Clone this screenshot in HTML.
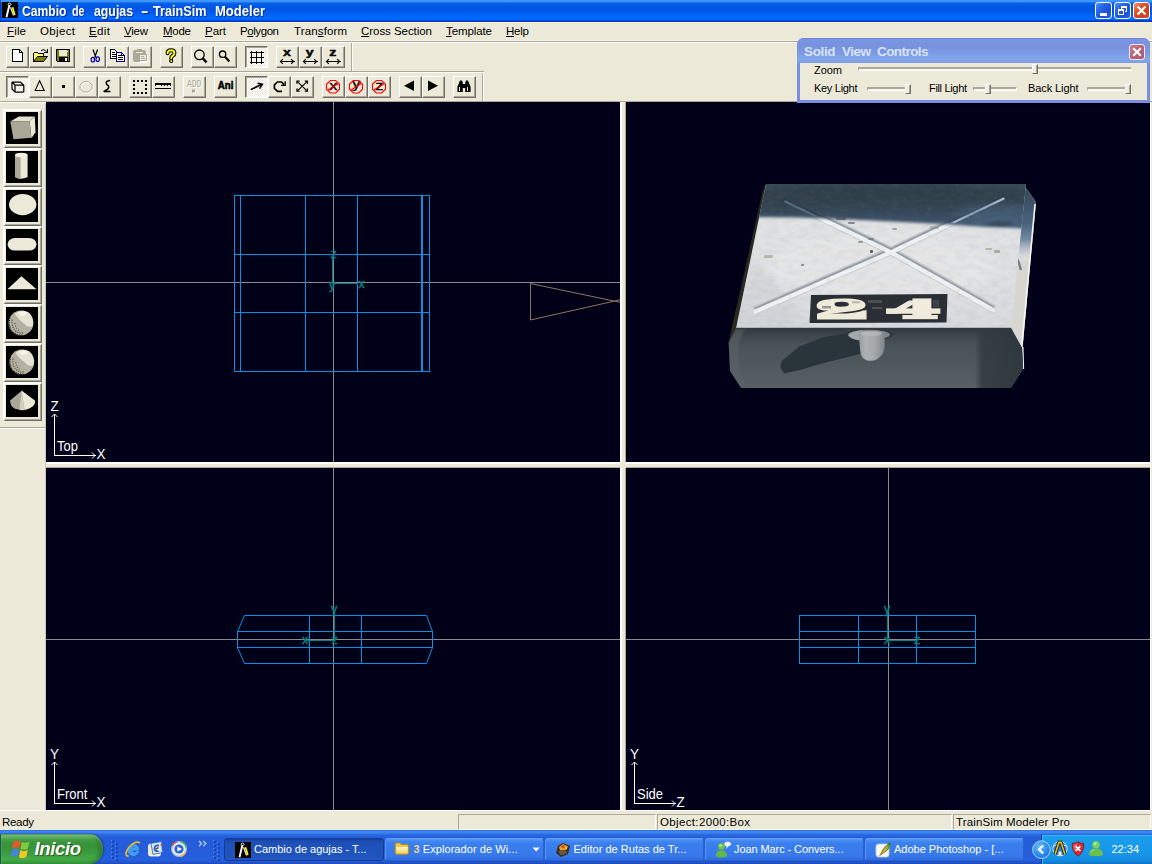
<!DOCTYPE html>
<html><head><meta charset="utf-8"><title>TrainSim Modeler</title>
<style>
html,body{margin:0;padding:0;}
body{width:1152px;height:864px;overflow:hidden;background:#ECE9D8;position:relative;font-family:"Liberation Sans",sans-serif;font-size:12px;color:#000;}
div,svg,span{position:absolute;box-sizing:border-box;}
.t{white-space:nowrap;line-height:1;}
.btn{background:#ECE9D8;border-top:1px solid #fff;border-left:1px solid #fff;border-right:1px solid #716F64;border-bottom:1px solid #716F64;}
.btn:after{content:"";position:absolute;left:0;top:0;right:0;bottom:0;border-right:1px solid #ACA899;border-bottom:1px solid #ACA899;}
.btnp{background-color:#F6F4EC;border-top:1px solid #716F64;border-left:1px solid #716F64;border-right:1px solid #fff;border-bottom:1px solid #fff;background-image:linear-gradient(45deg,#fff 25%,transparent 25%,transparent 75%,#fff 75%),linear-gradient(45deg,#fff 25%,transparent 25%,transparent 75%,#fff 75%);background-size:2px 2px;background-position:0 0,1px 1px;background-color:#ECE9D8;}
.btnp:after{content:"";position:absolute;left:0;top:0;right:0;bottom:0;border-left:1px solid #ACA899;border-top:1px solid #ACA899;}
.ico{left:0;top:0;}
.vp{background:#000019;overflow:hidden;}
.pane{border-top:1px solid #ACA899;border-left:1px solid #ACA899;border-right:1px solid #fff;border-bottom:1px solid #fff;}
.tb{color:#fff;font-size:11px;white-space:nowrap;line-height:1;}
</style></head>
<body>
<div style="left:0px;top:0px;width:1152px;height:22px;background:linear-gradient(to bottom,#4098FF 0,#3C93FC 1.5px,#1C74F0 2.5px,#0562E9 3.5px,#005AE6 5px,#0056E2 8px,#0058E8 11px,#0060F4 14px,#0067FD 16.5px,#0068FC 19.5px,#0048DC 20.5px,#0036CA 21.5px,#0034C8 22px);"></div>
<div style="left:0px;top:22px;width:1152px;height:1px;background:#F8F2DE;"></div>
<div style="left:2px;top:2px;width:16px;height:16px;background:#000;"><svg width="16" height="16" viewBox="0 0 16 16" style="left:0;top:0"><path d="M7.3 3.4L4.5 15.2" stroke="#fff" stroke-width="1.9" fill="none"/><path d="M8.5 5.2L11.6 13.6" stroke="#E4E4E4" stroke-width="1.3" fill="none"/><path d="M10.5 5.2L12.8 12.9" stroke="#FFFF00" stroke-width="1.7" fill="none"/><path d="M7.5 0.8L9.1 2.4L7.5 4L5.9 2.4Z" fill="none" stroke="#fff" stroke-width="1"/></svg></div>
<div style="left:0px;top:0px;width:1px;height:22px;background:rgba(0,16,110,.5);"></div>
<div class="t" style="left:22.0px;top:4px;font-size:14.5px;transform-origin:0 0;transform:scaleX(0.8369);font-weight:bold;color:#fff;text-shadow:1px 1px 0 #0A2A8A;">Cambio</div>
<div class="t" style="left:72.0px;top:4px;font-size:14.5px;transform-origin:0 0;transform:scaleX(0.7387);font-weight:bold;color:#fff;text-shadow:1px 1px 0 #0A2A8A;">de</div>
<div class="t" style="left:93.5px;top:4px;font-size:14.5px;transform-origin:0 0;transform:scaleX(0.849);font-weight:bold;color:#fff;text-shadow:1px 1px 0 #0A2A8A;">agujas</div>
<div class="t" style="left:140.5px;top:4px;font-size:14.5px;transform-origin:0 0;transform:scaleX(1.5484);font-weight:bold;color:#fff;text-shadow:1px 1px 0 #0A2A8A;">-</div>
<div class="t" style="left:152.5px;top:4px;font-size:14.5px;transform-origin:0 0;transform:scaleX(0.8735);font-weight:bold;color:#fff;text-shadow:1px 1px 0 #0A2A8A;">TrainSim</div>
<div class="t" style="left:214.5px;top:4px;font-size:14.5px;transform-origin:0 0;transform:scaleX(0.8994);font-weight:bold;color:#fff;text-shadow:1px 1px 0 #0A2A8A;">Modeler</div>
<div style="left:1095px;top:2px;width:17px;height:17px;border:1px solid #fff;border-radius:3px;background:linear-gradient(135deg,#4C8CF8 0%,#2864E8 35%,#1A50D8 70%,#2C68F0 100%);"><div style="left:4px;top:10px;width:7px;height:3px;background:#fff"></div></div>
<div style="left:1114px;top:2px;width:17px;height:17px;border:1px solid #fff;border-radius:3px;background:linear-gradient(135deg,#4C8CF8 0%,#2864E8 35%,#1A50D8 70%,#2C68F0 100%);"><svg width="15" height="15" viewBox="0 0 15 15" style="left:0;top:0" shape-rendering="crispEdges"><path d="M6.5 5.5V3.5H11.5V8.5H9.5" fill="none" stroke="#fff"/><rect x="6" y="3" width="6" height="2" fill="#fff"/><rect x="3.5" y="6.5" width="5" height="5" fill="none" stroke="#fff"/><rect x="3" y="6" width="6" height="2" fill="#fff"/></svg></div>
<div style="left:1133px;top:2px;width:17px;height:17px;border:1px solid #fff;border-radius:3px;background:linear-gradient(135deg,#F0967A 0%,#E0552E 35%,#C8401C 75%,#D85A30 100%);"><svg width="15" height="15" viewBox="0 0 15 15" style="left:0;top:0"><path d="M3.6 3.6L11.4 11.4M11.4 3.6L3.6 11.4" stroke="#fff" stroke-width="2.1" fill="none"/></svg></div>
<div class="t" style="left:7px;top:26px;font-size:11.5px;letter-spacing:0.151px;"><u>F</u>ile</div>
<div class="t" style="left:40px;top:26px;font-size:11.5px;letter-spacing:0.35px;">Object</div>
<div class="t" style="left:89px;top:26px;font-size:11.5px;letter-spacing:0.391px;"><u>E</u>dit</div>
<div class="t" style="left:124px;top:26px;font-size:11.5px;letter-spacing:-0.245px;"><u>V</u>iew</div>
<div class="t" style="left:163px;top:26px;font-size:11.5px;letter-spacing:-0.26px;"><u>M</u>ode</div>
<div class="t" style="left:205px;top:26px;font-size:11.5px;letter-spacing:-0.031px;"><u>P</u>art</div>
<div class="t" style="left:240px;top:26px;font-size:11.5px;letter-spacing:-0.43px;">P<u>o</u>lygon</div>
<div class="t" style="left:294px;top:26px;font-size:11.5px;letter-spacing:0.127px;">Tran<u>s</u>form</div>
<div class="t" style="left:361px;top:26px;font-size:11.5px;letter-spacing:-0.049px;"><u>C</u>ross Section</div>
<div class="t" style="left:446px;top:26px;font-size:11.5px;letter-spacing:-0.096px;"><u>T</u>emplate</div>
<div class="t" style="left:506px;top:26px;font-size:11.5px;letter-spacing:-0.224px;"><u>H</u>elp</div>
<div style="left:0px;top:40px;width:1152px;height:1px;background:#F6F4EC;"></div>
<div style="left:0px;top:41px;width:1152px;height:1px;background:#ACA899;"></div>
<div style="left:0px;top:42px;width:1152px;height:1px;background:#fff;"></div>
<div class="btn" style="left:6px;top:46px;width:23px;height:22px;"><div style="left:-1px;top:-1px;width:23px;height:22px;z-index:2"><svg class="ico" width="23" height="22" viewBox="0 0 23 22" shape-rendering="crispEdges"><path d="M6.5 3.5H13.5L16.5 6.5V15.5H6.5Z" fill="#fff" stroke="#000"/><path d="M13.5 3.5V6.5H16.5" fill="none" stroke="#000"/></svg></div></div>
<div class="btn" style="left:29px;top:46px;width:23px;height:22px;"><div style="left:-1px;top:-1px;width:23px;height:22px;z-index:2"><svg class="ico" width="23" height="22" viewBox="0 0 23 22" shape-rendering="crispEdges"><path d="M4.5 15.5V7.5L5.5 6.5H8.5L9.5 7.5H14.5V10" fill="#FFFF70" stroke="#000"/><path d="M4.5 15.5L8.5 10.5H18.5L14.5 15.5Z" fill="#808000" stroke="#000" shape-rendering="auto"/><path d="M12 4.6Q14.8 2.2 17.6 5.6" fill="none" stroke="#000" shape-rendering="auto"/><path d="M15 6.5H18.5V3" fill="none" stroke="#000"/></svg></div></div>
<div class="btn" style="left:52px;top:46px;width:23px;height:22px;"><div style="left:-1px;top:-1px;width:23px;height:22px;z-index:2"><svg class="ico" width="23" height="22" viewBox="0 0 23 22" shape-rendering="crispEdges"><path d="M4.5 3.5H17.5V15.5H5.5L4.5 14.5Z" fill="#808000" stroke="#000"/><rect x="7" y="4" width="8" height="6" fill="#ECE9D8"/><rect x="7" y="11" width="9" height="5" fill="#000"/><rect x="13" y="12" width="2" height="3" fill="#fff"/><rect x="15" y="5" width="1" height="1" fill="#fff"/></svg></div></div>
<div class="btn" style="left:83px;top:46px;width:23px;height:22px;"><div style="left:-1px;top:-1px;width:23px;height:22px;z-index:2"><svg class="ico" width="23" height="22" viewBox="0 0 23 22" ><path d="M10 3.5L12.9 11.5M14.6 3.5L11.7 11.5" fill="none" stroke="#000" stroke-width="1.2"/><ellipse cx="9.8" cy="13.7" rx="1.7" ry="2.3" fill="none" stroke="#0000A8" stroke-width="1.2"/><ellipse cx="14.7" cy="13.2" rx="1.7" ry="2.3" fill="none" stroke="#0000A8" stroke-width="1.2"/></svg></div></div>
<div class="btn" style="left:106px;top:46px;width:23px;height:22px;"><div style="left:-1px;top:-1px;width:23px;height:22px;z-index:2"><svg class="ico" width="23" height="22" viewBox="0 0 23 22" shape-rendering="crispEdges"><path d="M4.5 3.5H8.5L11.5 6.5V12.5H4.5Z" fill="#fff" stroke="#000"/><rect x="6" y="6" width="3" height="1" fill="#000"/><rect x="6" y="8" width="4" height="1" fill="#000"/><rect x="6" y="10" width="4" height="1" fill="#000"/><path d="M10.5 6.5H15.5L18.5 9.5V15.5H10.5Z" fill="#fff" stroke="#000080"/><path d="M15.5 6.5V9.5H18.5" fill="none" stroke="#000080"/><rect x="12" y="9" width="3" height="1" fill="#000"/><rect x="12" y="11" width="5" height="1" fill="#000"/><rect x="12" y="13" width="5" height="1" fill="#000"/></svg></div></div>
<div class="btn" style="left:129px;top:46px;width:23px;height:22px;"><div style="left:-1px;top:-1px;width:23px;height:22px;z-index:2"><svg class="ico" width="23" height="22" viewBox="0 0 23 22" ><rect x="5" y="5" width="13" height="12" rx="2" fill="#fff"/><rect x="4" y="4" width="13" height="12" rx="2" fill="#ACA899"/><rect x="8" y="3" width="5" height="2" fill="#ACA899"/><rect x="7" y="6" width="7" height="1" fill="#ECE9D8"/><rect x="11.5" y="9.5" width="7" height="6" fill="#ECE9D8" stroke="#fff"/><rect x="10.5" y="8.5" width="7" height="6" fill="#ECE9D8" stroke="#ACA899"/><rect x="12" y="10" width="3" height="1" fill="#ACA899"/><rect x="12" y="12" width="4" height="1" fill="#ACA899"/></svg></div></div>
<div class="btn" style="left:160px;top:46px;width:23px;height:22px;"><div style="left:-1px;top:-1px;width:23px;height:22px;z-index:2"><svg class="ico" width="23" height="22" viewBox="0 0 23 22" ><path d="M7.6 7.2Q7.6 4.2 11 4.2Q14.4 4.2 14.4 7Q14.4 8.8 12.6 9.8Q11.2 10.6 11.2 12.2" fill="none" stroke="#000" stroke-width="4" stroke-linecap="round"/><circle cx="11.2" cy="15" r="2.1" fill="#000"/><path d="M7.6 7.2Q7.6 4.2 11 4.2Q14.4 4.2 14.4 7Q14.4 8.8 12.6 9.8Q11.2 10.6 11.2 12.2" fill="none" stroke="#FFFF00" stroke-width="1.9" stroke-linecap="round"/><circle cx="11.2" cy="15" r="1" fill="#FFFF00"/></svg></div></div>
<div class="btn" style="left:191px;top:46px;width:23px;height:22px;"><div style="left:-1px;top:-1px;width:23px;height:22px;z-index:2"><svg class="ico" width="23" height="22" viewBox="0 0 23 22" ><circle cx="8.4" cy="8.8" r="4.8" fill="none" stroke="#000" stroke-width="1.3"/><path d="M11.8 12.4L15.6 16.4" stroke="#000" stroke-width="2.3"/></svg></div></div>
<div class="btn" style="left:214px;top:46px;width:23px;height:22px;"><div style="left:-1px;top:-1px;width:23px;height:22px;z-index:2"><svg class="ico" width="23" height="22" viewBox="0 0 23 22" ><circle cx="8.6" cy="8.2" r="3.2" fill="none" stroke="#000" stroke-width="1.3"/><path d="M10.8 10.6L15.4 15.4" stroke="#000" stroke-width="2.1"/></svg></div></div>
<div class="btnp" style="left:245px;top:46px;width:23px;height:22px;"><div style="left:-1px;top:-1px;width:23px;height:22px;z-index:2"><svg class="ico" style="left:0px;top:0px" width="23" height="22" viewBox="0 0 23 22" shape-rendering="crispEdges"><rect x="6" y="5" width="1" height="13" fill="#000"/><rect x="11" y="5" width="1" height="13" fill="#000"/><rect x="16" y="5" width="1" height="13" fill="#000"/><rect x="5" y="6" width="14" height="1" fill="#000"/><rect x="5" y="11" width="14" height="1" fill="#000"/><rect x="5" y="16" width="14" height="1" fill="#000"/></svg></div></div>
<div class="btn" style="left:276px;top:46px;width:23px;height:22px;"><div style="left:-1px;top:-1px;width:23px;height:22px;z-index:2"><svg class="ico" width="23" height="22" viewBox="0 0 23 22" ><text transform="translate(10.9 9.6) scale(1.35 1)" x="0" y="0" font-family="Liberation Sans, sans-serif" font-size="10.5" font-weight="bold" text-anchor="middle" fill="#000" stroke="#000" stroke-width="0.4">x</text><rect x="4" y="15" width="15" height="1" fill="#000"/><path d="M6.8 13.2L4.5 15.5L6.8 17.8M15.2 13.2L17.5 15.5L15.2 17.8" fill="none" stroke="#000" stroke-width="1.1"/></svg></div></div>
<div class="btn" style="left:299px;top:46px;width:23px;height:22px;"><div style="left:-1px;top:-1px;width:23px;height:22px;z-index:2"><svg class="ico" width="23" height="22" viewBox="0 0 23 22" ><text transform="translate(10.7 9.6) scale(1.35 1)" x="0" y="0" font-family="Liberation Sans, sans-serif" font-size="10.5" font-weight="bold" text-anchor="middle" fill="#000" stroke="#000" stroke-width="0.4">y</text><rect x="4" y="15" width="15" height="1" fill="#000"/><path d="M6.8 13.2L4.5 15.5L6.8 17.8M15.2 13.2L17.5 15.5L15.2 17.8" fill="none" stroke="#000" stroke-width="1.1"/></svg></div></div>
<div class="btn" style="left:322px;top:46px;width:23px;height:22px;"><div style="left:-1px;top:-1px;width:23px;height:22px;z-index:2"><svg class="ico" width="23" height="22" viewBox="0 0 23 22" ><text transform="translate(10.8 9.6) scale(1.35 1)" x="0" y="0" font-family="Liberation Sans, sans-serif" font-size="10.5" font-weight="bold" text-anchor="middle" fill="#000" stroke="#000" stroke-width="0.4">z</text><rect x="4" y="15" width="15" height="1" fill="#000"/><path d="M6.8 13.2L4.5 15.5L6.8 17.8M15.2 13.2L17.5 15.5L15.2 17.8" fill="none" stroke="#000" stroke-width="1.1"/></svg></div></div>
<div style="left:351px;top:43px;width:1px;height:28px;background:#ACA899;"></div>
<div style="left:352px;top:43px;width:1px;height:28px;background:#fff;"></div>
<div style="left:0px;top:71px;width:484px;height:1px;background:#ACA899;"></div>
<div style="left:0px;top:72px;width:484px;height:1px;background:#fff;"></div>
<div class="btnp" style="left:6px;top:76px;width:23px;height:22px;"><div style="left:-1px;top:-1px;width:23px;height:22px;z-index:2"><svg class="ico" style="left:0px;top:0px" width="23" height="22" viewBox="0 0 23 22" ><path d="M6 6H14.4L17.6 9.2M6 6V13L9 16M6 6L9 9" fill="none" stroke="#000" stroke-width="1.25"/><rect x="9" y="9" width="8.8" height="7" rx="0.8" fill="none" stroke="#000" stroke-width="1.25"/></svg></div></div>
<div class="btn" style="left:29px;top:76px;width:23px;height:22px;"><div style="left:-1px;top:-1px;width:23px;height:22px;z-index:2"><svg class="ico" width="23" height="22" viewBox="0 0 23 22" ><path d="M10.6 4.8L6.2 14.4H15.2Z" fill="none" stroke="#000" stroke-width="1.05"/></svg></div></div>
<div class="btn" style="left:52px;top:76px;width:23px;height:22px;"><div style="left:-1px;top:-1px;width:23px;height:22px;z-index:2"><svg class="ico" width="23" height="22" viewBox="0 0 23 22" shape-rendering="crispEdges"><rect x="10" y="9" width="3" height="3" fill="#000"/></svg></div></div>
<div class="btn" style="left:75px;top:76px;width:23px;height:22px;"><div style="left:-1px;top:-1px;width:23px;height:22px;z-index:2"><svg class="ico" width="23" height="22" viewBox="0 0 23 22" ><path d="M9.5 6.5H14.5L18 10V13.5L14.5 17H9.5L6 13.5V10Z" fill="none" stroke="#fff" stroke-width="0.9"/><path d="M8.5 5.5H13.5L17 9V12.5L13.5 16H8.5L5 12.5V9Z" fill="none" stroke="#ACA899" stroke-width="0.95"/></svg></div></div>
<div class="btn" style="left:98px;top:76px;width:23px;height:22px;"><div style="left:-1px;top:-1px;width:23px;height:22px;z-index:2"><svg class="ico" width="23" height="22" viewBox="0 0 23 22" ><path d="M12.2 4.6Q8.2 4.8 8.2 7Q8.2 8.6 10.6 9.8Q11.2 11.6 9.4 13.4L6 15.4H12.4" fill="none" stroke="#000" stroke-width="1.5" stroke-linejoin="round"/></svg></div></div>
<div class="btn" style="left:129px;top:76px;width:23px;height:22px;"><div style="left:-1px;top:-1px;width:23px;height:22px;z-index:2"><svg class="ico" width="23" height="22" viewBox="0 0 23 22" shape-rendering="crispEdges"><rect x="4" y="4" width="2" height="2" fill="#000"/><rect x="4" y="16" width="2" height="2" fill="#000"/><rect x="8" y="4" width="2" height="2" fill="#000"/><rect x="8" y="16" width="2" height="2" fill="#000"/><rect x="12" y="4" width="2" height="2" fill="#000"/><rect x="12" y="16" width="2" height="2" fill="#000"/><rect x="16" y="4" width="2" height="2" fill="#000"/><rect x="16" y="16" width="2" height="2" fill="#000"/><rect x="4" y="8" width="2" height="2" fill="#000"/><rect x="16" y="8" width="2" height="2" fill="#000"/><rect x="4" y="12" width="2" height="2" fill="#000"/><rect x="16" y="12" width="2" height="2" fill="#000"/></svg></div></div>
<div class="btn" style="left:152px;top:76px;width:23px;height:22px;"><div style="left:-1px;top:-1px;width:23px;height:22px;z-index:2"><svg class="ico" width="23" height="22" viewBox="0 0 23 22" shape-rendering="crispEdges"><rect x="3" y="7" width="16" height="2" fill="#000"/><rect x="3" y="9" width="1" height="1" fill="#000"/><rect x="6" y="9" width="1" height="1" fill="#000"/><rect x="9" y="9" width="1" height="1" fill="#000"/><rect x="12" y="9" width="1" height="1" fill="#000"/><rect x="15" y="9" width="1" height="1" fill="#000"/><rect x="18" y="9" width="1" height="1" fill="#000"/><rect x="18" y="9" width="1" height="1" fill="#000"/><rect x="3" y="12" width="16" height="1" fill="#000"/><rect x="5" y="9" width="2" height="1" fill="#fff"/></svg></div></div>
<div class="btn" style="left:183px;top:76px;width:23px;height:22px;"><div style="left:-1px;top:-1px;width:23px;height:22px;z-index:2"><svg class="ico" width="23" height="22" viewBox="0 0 23 22" ><text x="12.2" y="12" font-family="Liberation Mono, monospace" font-size="10.5" text-anchor="middle" fill="#fff" textLength="14.5" lengthAdjust="spacingAndGlyphs">ADD</text><rect x="10" y="14.5" width="3" height="3" fill="#fff"/><text x="11.2" y="11" font-family="Liberation Mono, monospace" font-size="10.5" text-anchor="middle" fill="#ACA899" textLength="14.5" lengthAdjust="spacingAndGlyphs">ADD</text><rect x="9" y="13.5" width="3" height="3" fill="#ACA899"/></svg></div></div>
<div class="btn" style="left:214px;top:76px;width:23px;height:22px;"><div style="left:-1px;top:-1px;width:23px;height:22px;z-index:2"><svg class="ico" width="23" height="22" viewBox="0 0 23 22" ><text transform="translate(11.6 12.8) scale(0.88 1)" x="0" y="0" font-family="Liberation Sans, sans-serif" font-size="11" font-weight="bold" text-anchor="middle" fill="#000" stroke="#000" stroke-width="0.6">Ani</text></svg></div></div>
<div class="btnp" style="left:245px;top:76px;width:23px;height:22px;"><div style="left:-1px;top:-1px;width:23px;height:22px;z-index:2"><svg class="ico" style="left:0px;top:0px" width="23" height="22" viewBox="0 0 23 22" ><path d="M6.4 13.2L16.4 8.6" stroke="#000" stroke-width="1.7" stroke-linecap="round"/><path d="M12.6 7.2L17.4 8.2L14.6 12.6" fill="none" stroke="#000" stroke-width="1.5"/></svg></div></div>
<div class="btn" style="left:268px;top:76px;width:23px;height:22px;"><div style="left:-1px;top:-1px;width:23px;height:22px;z-index:2"><svg class="ico" width="23" height="22" viewBox="0 0 23 22" ><path d="M14 15.4H9.6L6.4 12.4V8.8L9.4 6H13.4L16.2 8.6" fill="none" stroke="#000" stroke-width="1.7"/><path d="M13 9.4H17.2V5.2" fill="none" stroke="#000" stroke-width="1.3"/></svg></div></div>
<div class="btn" style="left:291px;top:76px;width:23px;height:22px;"><div style="left:-1px;top:-1px;width:23px;height:22px;z-index:2"><svg class="ico" width="23" height="22" viewBox="0 0 23 22" ><path d="M6.4 5.6L16 14.8M16 5.6L6.4 14.8" stroke="#000" stroke-width="1.1"/><path d="M6 7.8V5.2H8.6M13.8 5.2H16.4V7.8M6 12.6V15.2H8.6M13.8 15.2H16.4V12.6" fill="none" stroke="#000" stroke-width="1.3"/></svg></div></div>
<div class="btn" style="left:322px;top:76px;width:23px;height:22px;"><div style="left:-1px;top:-1px;width:23px;height:22px;z-index:2"><svg class="ico" width="23" height="22" viewBox="0 0 23 22" ><text transform="translate(11.2 14.4) scale(1.25 1)" x="0" y="0" font-family="Liberation Sans, sans-serif" font-size="13" text-anchor="middle" fill="#000" stroke="#000" stroke-width="0.3">x</text><path d="M8.3 4.5H13.7L17.5 8.3V13.2L13.7 17H8.3L4.5 13.2V8.3Z" fill="none" stroke="#FF0000" stroke-width="1.1"/><path d="M6 14L16.4 7.4" stroke="#FF0000" stroke-width="1.2"/></svg></div></div>
<div class="btn" style="left:345px;top:76px;width:23px;height:22px;"><div style="left:-1px;top:-1px;width:23px;height:22px;z-index:2"><svg class="ico" width="23" height="22" viewBox="0 0 23 22" ><text transform="translate(11.2 12.4) scale(1.25 1)" x="0" y="0" font-family="Liberation Sans, sans-serif" font-size="13" text-anchor="middle" fill="#000" stroke="#000" stroke-width="0.3">y</text><path d="M8.3 4.5H13.7L17.5 8.3V13.2L13.7 17H8.3L4.5 13.2V8.3Z" fill="none" stroke="#FF0000" stroke-width="1.1"/><path d="M6 14L16.4 7.4" stroke="#FF0000" stroke-width="1.2"/></svg></div></div>
<div class="btn" style="left:368px;top:76px;width:23px;height:22px;"><div style="left:-1px;top:-1px;width:23px;height:22px;z-index:2"><svg class="ico" width="23" height="22" viewBox="0 0 23 22" ><text transform="translate(11.2 14.4) scale(1.25 1)" x="0" y="0" font-family="Liberation Sans, sans-serif" font-size="13" text-anchor="middle" fill="#000" stroke="#000" stroke-width="0.3">z</text><path d="M8.3 4.5H13.7L17.5 8.3V13.2L13.7 17H8.3L4.5 13.2V8.3Z" fill="none" stroke="#FF0000" stroke-width="1.1"/><path d="M6 14L16.4 7.4" stroke="#FF0000" stroke-width="1.2"/></svg></div></div>
<div class="btn" style="left:399px;top:76px;width:23px;height:22px;"><div style="left:-1px;top:-1px;width:23px;height:22px;z-index:2"><svg class="ico" width="23" height="22" viewBox="0 0 23 22" ><path d="M15 4.6V15L5 9.8Z" fill="#000"/></svg></div></div>
<div class="btn" style="left:422px;top:76px;width:23px;height:22px;"><div style="left:-1px;top:-1px;width:23px;height:22px;z-index:2"><svg class="ico" width="23" height="22" viewBox="0 0 23 22" ><path d="M6 4.6V15L16 9.8Z" fill="#000"/></svg></div></div>
<div class="btn" style="left:453px;top:76px;width:23px;height:22px;"><div style="left:-1px;top:-1px;width:23px;height:22px;z-index:2"><svg class="ico" width="23" height="22" viewBox="0 0 23 22" ><path d="M4.4 16V11L6.2 6.4L7 4.6H9L9.8 7V16Z" fill="#000"/><path d="M17.6 16V11L15.8 6.4L15 4.6H13L12.2 7V16Z" fill="#000"/><rect x="9" y="8" width="4" height="4" fill="#000"/><rect x="6" y="11" width="1" height="4" fill="#ECE9D8"/><rect x="14" y="11" width="1" height="4" fill="#ECE9D8"/></svg></div></div>
<div style="left:482px;top:73px;width:1px;height:28px;background:#ACA899;"></div>
<div style="left:483px;top:73px;width:1px;height:28px;background:#fff;"></div>
<div style="left:0px;top:101px;width:1152px;height:1px;background:#ACA899;"></div>
<div style="left:0px;top:102px;width:46px;height:1px;background:#fff;"></div>
<div style="left:3px;top:109px;width:39px;height:39px;background:#ECE9D8;border-left:2px solid #fff;border-top:2px solid #fff;border-right:1px solid #716F64;border-bottom:1px solid #716F64;"><div style="left:0;top:0;right:0;bottom:0;border-right:1px solid #ACA899;border-bottom:1px solid #ACA899;"></div><div style="left:1px;top:1px;width:32px;height:32px;background:#000;"><svg width="32" height="32" viewBox="0 0 32 32" style="left:0;top:0"><path d="M4.3 9.4L12.8 4.5H28.6L23.6 8.9Z" fill="#E4E1D0"/><path d="M23.6 8.9L28.8 4.6L29.5 20.3L25.4 26.2Z" fill="#ECE9D8"/><path d="M4.3 9.4L23.6 8.9L25.3 25.8L7.5 27.2Z" fill="#ACA899"/></svg></div></div>
<div style="left:3px;top:148px;width:39px;height:39px;background:#ECE9D8;border-left:2px solid #fff;border-top:2px solid #fff;border-right:1px solid #716F64;border-bottom:1px solid #716F64;"><div style="left:0;top:0;right:0;bottom:0;border-right:1px solid #ACA899;border-bottom:1px solid #ACA899;"></div><div style="left:1px;top:1px;width:32px;height:32px;background:#000;"><svg width="32" height="32" viewBox="0 0 32 32" style="left:0;top:0"><path d="M9 4Q15 1 21.6 4V26Q15 29.4 9 26Z" fill="#ECE9D8"/><path d="M9 4V26Q11.6 27.8 14.6 28V6Q11.4 5.8 9 4Z" fill="#ACA899"/><ellipse cx="15.3" cy="4" rx="6.3" ry="2.3" fill="#F2F0E2"/></svg></div></div>
<div style="left:3px;top:187px;width:39px;height:39px;background:#ECE9D8;border-left:2px solid #fff;border-top:2px solid #fff;border-right:1px solid #716F64;border-bottom:1px solid #716F64;"><div style="left:0;top:0;right:0;bottom:0;border-right:1px solid #ACA899;border-bottom:1px solid #ACA899;"></div><div style="left:1px;top:1px;width:32px;height:32px;background:#000;"><svg width="32" height="32" viewBox="0 0 32 32" style="left:0;top:0"><ellipse cx="16.7" cy="14.6" rx="13.7" ry="10.6" fill="#ECE9D8"/></svg></div></div>
<div style="left:3px;top:226px;width:39px;height:39px;background:#ECE9D8;border-left:2px solid #fff;border-top:2px solid #fff;border-right:1px solid #716F64;border-bottom:1px solid #716F64;"><div style="left:0;top:0;right:0;bottom:0;border-right:1px solid #ACA899;border-bottom:1px solid #ACA899;"></div><div style="left:1px;top:1px;width:32px;height:32px;background:#000;"><svg width="32" height="32" viewBox="0 0 32 32" style="left:0;top:0"><path d="M1.6 15.2Q2.4 9 9 8.9H23Q29.8 9 30.5 15.2Q29.8 21.6 23 21.6H9Q2.4 21.6 1.6 15.2Z" fill="#ECE9D8"/></svg></div></div>
<div style="left:3px;top:265px;width:39px;height:39px;background:#ECE9D8;border-left:2px solid #fff;border-top:2px solid #fff;border-right:1px solid #716F64;border-bottom:1px solid #716F64;"><div style="left:0;top:0;right:0;bottom:0;border-right:1px solid #ACA899;border-bottom:1px solid #ACA899;"></div><div style="left:1px;top:1px;width:32px;height:32px;background:#000;"><svg width="32" height="32" viewBox="0 0 32 32" style="left:0;top:0"><path d="M15.4 8.2L30.6 21.3H1.4Z" fill="#ECE9D8"/></svg></div></div>
<div style="left:3px;top:304px;width:39px;height:39px;background:#ECE9D8;border-left:2px solid #fff;border-top:2px solid #fff;border-right:1px solid #716F64;border-bottom:1px solid #716F64;"><div style="left:0;top:0;right:0;bottom:0;border-right:1px solid #ACA899;border-bottom:1px solid #ACA899;"></div><div style="left:1px;top:1px;width:32px;height:32px;background:#000;"><svg width="32" height="32" viewBox="0 0 32 32" style="left:0;top:0"><g transform="translate(-1.05 -1.2) scale(1.07)"><circle cx="15" cy="16" r="11.6" fill="#B4B1A2"/><path d="M9 7.5Q15 2.5 22 6Q27.4 10.5 26 19Q21 21 18.5 17Q12 12.5 9 7.5Z" fill="#E6E3D2"/><path d="M12 6.6Q16 3.6 21.4 6.2Q19 10 15 9.4Z" fill="#F6F4E8"/><path d="M4.6 11Q2.8 18 6.2 23.5Q10.4 28 16.4 27.4" fill="none" stroke="#2e2c25" stroke-width="1.2" stroke-dasharray="1.2 0.9"/><path d="M6.8 13Q5.8 19.5 10 23.6Q13 26 17 25.2" fill="none" stroke="#4a473f" stroke-width="1.1" stroke-dasharray="1 1.2"/><path d="M9.4 16Q9.6 21 13.4 23.4" fill="none" stroke="#5a574e" stroke-width="1" stroke-dasharray="1 1.4"/></g></svg></div></div>
<div style="left:3px;top:343px;width:39px;height:39px;background:#ECE9D8;border-left:2px solid #fff;border-top:2px solid #fff;border-right:1px solid #716F64;border-bottom:1px solid #716F64;"><div style="left:0;top:0;right:0;bottom:0;border-right:1px solid #ACA899;border-bottom:1px solid #ACA899;"></div><div style="left:1px;top:1px;width:32px;height:32px;background:#000;"><svg width="32" height="32" viewBox="0 0 32 32" style="left:0;top:0"><g transform="translate(-1.11 -1.2) scale(1.07)"><circle cx="15.8" cy="16" r="11.6" fill="#B4B1A2"/><path d="M9.8 7.5Q15.8 2.5 22.8 6Q28.2 10.5 26.8 19Q21.8 21 19.3 17Q12.8 12.5 9.8 7.5Z" fill="#E6E3D2"/><path d="M12.8 6.6Q16.8 3.6 22.2 6.2Q19.8 10 15.8 9.4Z" fill="#F6F4E8"/><path d="M5.4 11Q3.6000000000000005 18 7.000000000000001 23.5Q11.200000000000001 28 17.2 27.4" fill="none" stroke="#2e2c25" stroke-width="1.2" stroke-dasharray="1.2 0.9"/><path d="M7.6000000000000005 13Q6.6000000000000005 19.5 10.8 23.6Q13.8 26 17.8 25.2" fill="none" stroke="#4a473f" stroke-width="1.1" stroke-dasharray="1 1.2"/><path d="M10.200000000000001 16Q10.4 21 14.200000000000001 23.4" fill="none" stroke="#5a574e" stroke-width="1" stroke-dasharray="1 1.4"/></g></svg></div></div>
<div style="left:3px;top:382px;width:39px;height:39px;background:#ECE9D8;border-left:2px solid #fff;border-top:2px solid #fff;border-right:1px solid #716F64;border-bottom:1px solid #716F64;"><div style="left:0;top:0;right:0;bottom:0;border-right:1px solid #ACA899;border-bottom:1px solid #ACA899;"></div><div style="left:1px;top:1px;width:32px;height:32px;background:#000;"><svg width="32" height="32" viewBox="0 0 32 32" style="left:0;top:0"><path d="M15.7 5.8L29 15.8Q29.6 20 24 23Q17 26 9.5 24Q4 21.5 4.1 15.5Z" fill="#ACA899"/><path d="M15.7 5.8L29 15.8Q29.6 20 24 23Q21.5 24.4 18.6 24.9Z" fill="#ECE9D8"/><path d="M15.7 5.8L18.6 24.9Q16 25.3 13.4 25Z" fill="#D2CFBE"/></svg></div></div>
<div style="left:0px;top:427px;width:45px;height:1px;background:#ACA899;"></div>
<div style="left:0px;top:428px;width:45px;height:1px;background:#fff;"></div>
<div style="left:46px;top:102px;width:1104px;height:708px;background:#000019;"></div>
<div style="left:620px;top:102px;width:6px;height:708px;background:linear-gradient(to right,#fff 0,#fff 2px,#ECE9D8 2px,#ECE9D8 5px,#ACA899 5px);"></div>
<div style="left:46px;top:462px;width:1104px;height:6px;background:linear-gradient(to bottom,#fff 0,#fff 2px,#ECE9D8 2px,#ECE9D8 5px,#ACA899 5px);"></div>
<div style="left:620px;top:462px;width:6px;height:6px;background:#ECE9D8;"></div>
<div style="left:1150px;top:102px;width:1px;height:710px;background:#fff;"></div>
<div style="left:1151px;top:102px;width:1px;height:710px;background:#ECE9D8;"></div>
<div style="left:45px;top:103px;width:1px;height:707px;background:#C9C6B5;"></div>
<div style="left:0px;top:810px;width:1151px;height:2px;background:#fff;"></div>
<svg width="1152" height="864" viewBox="0 0 1152 864" style="left:0;top:0" shape-rendering="crispEdges"><defs><clipPath id="cTL"><rect x="46" y="102" width="574" height="360"/></clipPath><clipPath id="cTR"><rect x="626" y="102" width="524" height="360"/></clipPath><clipPath id="cBL"><rect x="46" y="468" width="574" height="342"/></clipPath><clipPath id="cBR"><rect x="626" y="468" width="524" height="342"/></clipPath></defs><g clip-path="url(#cTL)"><rect x="333" y="102" width="1" height="360" fill="#8A8A8A"/><rect x="46" y="282" width="574" height="1" fill="#8A8A8A"/><path d="M621 302.5L530.5 283.5V320L621 299.6" fill="none" stroke="#8E775E" stroke-width="1" shape-rendering="auto"/><rect x="234" y="195" width="1" height="177" fill="#0094E2"/><rect x="240" y="195" width="1" height="177" fill="#0094E2"/><rect x="305" y="195" width="1" height="177" fill="#0094E2"/><rect x="357" y="195" width="1" height="177" fill="#0094E2"/><rect x="429" y="195" width="1" height="177" fill="#0094E2"/><rect x="421" y="195" width="2" height="177" fill="#0094E2"/><rect x="234" y="195" width="196" height="1" fill="#0094E2"/><rect x="234" y="254" width="196" height="1" fill="#0094E2"/><rect x="234" y="312" width="196" height="1" fill="#0094E2"/><rect x="234" y="371" width="196" height="1" fill="#0094E2"/><rect x="332" y="257" width="1" height="27" fill="#008080"/><rect x="332" y="283" width="26" height="1" fill="#008080"/><text x="333.5" y="258" font-family="Liberation Sans, sans-serif" font-size="12.5" fill="#008080" stroke="#008080" stroke-width="0.45" text-anchor="middle">z</text><text x="332" y="289" font-family="Liberation Sans, sans-serif" font-size="12.5" fill="#008080" stroke="#008080" stroke-width="0.45" text-anchor="middle">y</text><text x="361.5" y="288" font-family="Liberation Sans, sans-serif" font-size="12.5" fill="#008080" stroke="#008080" stroke-width="0.45" text-anchor="middle">x</text><rect x="54" y="414" width="1" height="42" fill="#fff"/><rect x="54" y="455" width="42" height="1" fill="#fff"/><path d="M51.5 417L54.5 414L57.5 417" fill="none" stroke="#fff" stroke-width="1" shape-rendering="auto"/><path d="M92 452.5L95 455.5L92 458.5" fill="none" stroke="#fff" stroke-width="1" shape-rendering="auto"/><text transform="translate(54.5 411) scale(1.04 1.12)" x="0" y="0" font-family="Liberation Sans, sans-serif" font-size="13" fill="#fff" text-anchor="middle">Z</text><text transform="translate(96.5 459) scale(1.04 1.12)" x="0" y="0" font-family="Liberation Sans, sans-serif" font-size="13" fill="#fff">X</text><text transform="translate(57 451) scale(1 1.12)" x="0" y="0" font-family="Liberation Sans, sans-serif" font-size="13" fill="#fff">Top</text></g><g clip-path="url(#cBL)"><rect x="333" y="468" width="1" height="342" fill="#8A8A8A"/><rect x="46" y="639" width="574" height="1" fill="#8A8A8A"/><path d="M244.5 615.5H426.5L432.5 631.5V647.5L426.5 663.5H244.5L237.5 647.5V631.5Z" fill="none" stroke="#0094E2" stroke-width="1" shape-rendering="auto"/><rect x="237" y="631" width="196" height="1" fill="#0094E2"/><rect x="237" y="647" width="196" height="1" fill="#0094E2"/><rect x="309" y="615" width="1" height="49" fill="#0094E2"/><rect x="361" y="615" width="1" height="49" fill="#0094E2"/><rect x="334" y="612" width="1" height="29" fill="#008080"/><rect x="306" y="640" width="29" height="1" fill="#008080"/><text x="334" y="613" font-family="Liberation Sans, sans-serif" font-size="12.5" fill="#008080" stroke="#008080" stroke-width="0.45" text-anchor="middle">y</text><text x="305" y="644" font-family="Liberation Sans, sans-serif" font-size="12.5" fill="#008080" stroke="#008080" stroke-width="0.45" text-anchor="middle">x</text><text x="334.5" y="644" font-family="Liberation Sans, sans-serif" font-size="12.5" fill="#008080" stroke="#008080" stroke-width="0.45" text-anchor="middle">z</text><rect x="54" y="762" width="1" height="42" fill="#fff"/><rect x="54" y="803" width="42" height="1" fill="#fff"/><path d="M51.5 765L54.5 762L57.5 765" fill="none" stroke="#fff" stroke-width="1" shape-rendering="auto"/><path d="M92 800.5L95 803.5L92 806.5" fill="none" stroke="#fff" stroke-width="1" shape-rendering="auto"/><text transform="translate(54.5 759) scale(1.04 1.12)" x="0" y="0" font-family="Liberation Sans, sans-serif" font-size="13" fill="#fff" text-anchor="middle">Y</text><text transform="translate(96.5 807) scale(1.04 1.12)" x="0" y="0" font-family="Liberation Sans, sans-serif" font-size="13" fill="#fff">X</text><text transform="translate(57 799) scale(1 1.12)" x="0" y="0" font-family="Liberation Sans, sans-serif" font-size="13" fill="#fff">Front</text></g><g clip-path="url(#cBR)"><rect x="888" y="468" width="1" height="342" fill="#8A8A8A"/><rect x="626" y="639" width="524" height="1" fill="#8A8A8A"/><rect x="799" y="615" width="1" height="49" fill="#0094E2"/><rect x="858" y="615" width="1" height="49" fill="#0094E2"/><rect x="916" y="615" width="1" height="49" fill="#0094E2"/><rect x="975" y="615" width="1" height="49" fill="#0094E2"/><rect x="799" y="615" width="177" height="1" fill="#0094E2"/><rect x="799" y="631" width="177" height="1" fill="#0094E2"/><rect x="799" y="647" width="177" height="1" fill="#0094E2"/><rect x="799" y="663" width="177" height="1" fill="#0094E2"/><rect x="887" y="612" width="1" height="29" fill="#008080"/><rect x="887" y="640" width="30" height="1" fill="#008080"/><text x="887" y="613" font-family="Liberation Sans, sans-serif" font-size="12.5" fill="#008080" stroke="#008080" stroke-width="0.45" text-anchor="middle">y</text><text x="887" y="644" font-family="Liberation Sans, sans-serif" font-size="12.5" fill="#008080" stroke="#008080" stroke-width="0.45" text-anchor="middle">x</text><text x="917" y="644" font-family="Liberation Sans, sans-serif" font-size="12.5" fill="#008080" stroke="#008080" stroke-width="0.45" text-anchor="middle">z</text><rect x="634" y="762" width="1" height="42" fill="#fff"/><rect x="634" y="803" width="42" height="1" fill="#fff"/><path d="M631.5 765L634.5 762L637.5 765" fill="none" stroke="#fff" stroke-width="1" shape-rendering="auto"/><path d="M672 800.5L675 803.5L672 806.5" fill="none" stroke="#fff" stroke-width="1" shape-rendering="auto"/><text transform="translate(634.5 759) scale(1.04 1.12)" x="0" y="0" font-family="Liberation Sans, sans-serif" font-size="13" fill="#fff" text-anchor="middle">Y</text><text transform="translate(676.5 807) scale(1.04 1.12)" x="0" y="0" font-family="Liberation Sans, sans-serif" font-size="13" fill="#fff">Z</text><text transform="translate(637 799) scale(1 1.12)" x="0" y="0" font-family="Liberation Sans, sans-serif" font-size="13" fill="#fff">Side</text></g><g clip-path="url(#cTR)" shape-rendering="auto"><defs>
<linearGradient id="gTop" gradientUnits="userSpaceOnUse" x1="0" y1="184" x2="0" y2="328">
<stop offset="0" stop-color="#2C3B4C"/><stop offset="0.06" stop-color="#34475A"/><stop offset="0.13" stop-color="#41566B"/>
<stop offset="0.185" stop-color="#5A6F85"/><stop offset="0.215" stop-color="#93A3B3"/><stop offset="0.25" stop-color="#D2D6DA"/>
<stop offset="0.32" stop-color="#DCDDDE"/><stop offset="0.6" stop-color="#D8DADC"/><stop offset="1" stop-color="#D0D3D7"/>
</linearGradient>
<linearGradient id="gFront" gradientUnits="userSpaceOnUse" x1="0" y1="328" x2="0" y2="388">
<stop offset="0" stop-color="#2F383D"/><stop offset="0.12" stop-color="#3C464B"/><stop offset="0.3" stop-color="#495358"/>
<stop offset="0.7" stop-color="#505A5F"/><stop offset="1" stop-color="#566065"/>
</linearGradient>
<linearGradient id="gFrontR" gradientUnits="userSpaceOnUse" x1="975" y1="0" x2="1024" y2="0">
<stop offset="0" stop-color="#313B40" stop-opacity="0"/><stop offset="0.14" stop-color="#313B40" stop-opacity="0.85"/><stop offset="1" stop-color="#2C363B" stop-opacity="0.95"/>
</linearGradient>
<linearGradient id="gChamSh" gradientUnits="userSpaceOnUse" x1="0" y1="184" x2="0" y2="258">
<stop offset="0" stop-color="#35485B"/><stop offset="0.3" stop-color="#3E546A"/><stop offset="0.55" stop-color="#4A647E"/><stop offset="0.75" stop-color="#5F7B95" stop-opacity="0.85"/><stop offset="1" stop-color="#9FB2C4" stop-opacity="0"/>
</linearGradient>
<linearGradient id="gKnob" gradientUnits="userSpaceOnUse" x1="858" y1="0" x2="886" y2="0">
<stop offset="0" stop-color="#959B9E"/><stop offset="0.3" stop-color="#AEB2B3"/><stop offset="0.6" stop-color="#A3A7A9"/><stop offset="1" stop-color="#7A8184"/>
</linearGradient>
<filter id="fNoise" x="0" y="0" width="100%" height="100%" color-interpolation-filters="sRGB">
<feTurbulence type="fractalNoise" baseFrequency="0.09 0.2" numOctaves="4" seed="7" result="n"/>
<feColorMatrix in="n" type="matrix" values="0 0 0 0 0.30  0 0 0 0 0.33  0 0 0 0 0.37  2.4 0 0 0 -1.0"/>
</filter>
<filter id="fNoiseL" x="0" y="0" width="100%" height="100%" color-interpolation-filters="sRGB">
<feTurbulence type="fractalNoise" baseFrequency="0.12 0.25" numOctaves="3" seed="3" result="n"/>
<feColorMatrix in="n" type="matrix" values="0 0 0 0 1  0 0 0 0 1  0 0 0 0 1  0 2.2 0 0 -1.0"/>
</filter>
<filter id="b1" x="-5%" y="-5%" width="110%" height="110%"><feGaussianBlur stdDeviation="0.7"/></filter>
<filter id="b1b" x="-5%" y="-5%" width="110%" height="110%"><feGaussianBlur stdDeviation="0.75"/></filter>
<filter id="b2" x="-10%" y="-10%" width="120%" height="120%"><feGaussianBlur stdDeviation="2.2"/></filter>
<filter id="b3" x="-10%" y="-10%" width="120%" height="120%"><feGaussianBlur stdDeviation="1.1"/></filter>
<filter id="b4" x="-10%" y="-10%" width="120%" height="120%"><feGaussianBlur stdDeviation="1.7"/></filter>
<filter id="b5" x="-20%" y="-20%" width="140%" height="140%"><feGaussianBlur stdDeviation="5"/></filter>
<linearGradient id="gTopL" gradientUnits="userSpaceOnUse" x1="0" y1="184" x2="0" y2="328">
<stop offset="0" stop-color="#DDE0E3"/><stop offset="0.35" stop-color="#E1E2E3"/><stop offset="0.7" stop-color="#DEDFE1"/><stop offset="1" stop-color="#D8DADD"/>
</linearGradient>
<linearGradient id="gShade" gradientUnits="userSpaceOnUse" x1="0" y1="184" x2="0" y2="246">
<stop offset="0" stop-color="#394957"/><stop offset="0.1" stop-color="#33434E"/><stop offset="0.3" stop-color="#32424E"/><stop offset="0.45" stop-color="#35485A"/><stop offset="0.56" stop-color="#3B5064"/><stop offset="0.75" stop-color="#456078"/><stop offset="1" stop-color="#506C86"/>
</linearGradient>
<clipPath id="cShade"><path d="M750 178H1045V228L1015 226L985 225L950 222.5L900 220L850 217.5L800 215.5L750 215Z"/></clipPath>
<clipPath id="cTopFace"><path d="M766 184H1026L1011 328.5H736Z"/></clipPath>
<clipPath id="cCham"><path d="M1023 184L1036 202L1022.5 348L1008 328.5Z"/></clipPath>
<clipPath id="cFront"><path d="M736 328H1011L1022 348L1023 369L1011 388H741L730 371L728.6 342.5Z"/></clipPath>
</defs><path d="M766 184L762.6 191L728.4 343L736 328.5Z" fill="#2A2920"/><path d="M1023 184L1036 202L1022.5 348L1008 328.5Z" fill="#DCDCDA"/><g clip-path="url(#cCham)"><rect x="1008" y="184" width="32" height="74" fill="url(#gChamSh)"/><path d="M1012 262L1030 262L1024 348L1008 330Z" fill="#D2CFC8" opacity="0.5" filter="url(#b3)"/><path d="M1036.6 204L1023.2 348" fill="none" stroke="#F6F6F4" stroke-width="4.6"/></g><path d="M1016.5 257Q1019 262 1021 270" fill="none" stroke="#5D6872" stroke-width="2.4" opacity="0.8" filter="url(#b1)"/><path d="M1022.8 347L1023.4 369" fill="none" stroke="#ECECEA" stroke-width="1.5"/><path d="M766 184H1026L1011 328.5H736Z" fill="url(#gTopL)"/><g clip-path="url(#cTopFace)"><ellipse cx="880" cy="268" rx="115" ry="34" fill="#E9EAEA" filter="url(#b5)" opacity="0.5"/><path d="M730 332L752 262L792 300L806 332Z" fill="#C9CDD2" filter="url(#b5)" opacity="0.45"/><g filter="url(#b1b)"><path d="M783 199L891 251L994 309" fill="none" stroke="#C6CACE" stroke-width="8.5" stroke-linecap="butt"/><path d="M1005 196.5L891 251L754.5 310.5" fill="none" stroke="#C6CACE" stroke-width="8.5" stroke-linecap="butt"/><path d="M783 197L891 249L994 307" fill="none" stroke="#8E98A3" stroke-width="2" opacity="0.85"/><path d="M1005 194.6L891 249L754.5 308.6" fill="none" stroke="#8E98A3" stroke-width="2" opacity="0.85"/><path d="M783.6 200.6L891 252.4L993 310.2" fill="none" stroke="#EFF1F2" stroke-width="4.2" stroke-linecap="round"/><path d="M1004.4 198.2L891 252.4L755.5 311.6" fill="none" stroke="#EFF1F2" stroke-width="4.2" stroke-linecap="round"/></g><g filter="url(#b4)"><path d="M750 178H1045V230L1015 228L985 227L950 224.5L900 222L850 219.5L800 217.5L750 217Z" fill="url(#gShade)"/></g><g clip-path="url(#cShade)" filter="url(#b1)"><path d="M783 199L891 251" fill="none" stroke="#27364A" stroke-width="3.4" opacity="0.7"/><path d="M784.4 201L891 252.6" fill="none" stroke="#566D82" stroke-width="2.2"/><path d="M1005 196.5L891 251" fill="none" stroke="#27364A" stroke-width="3.6" opacity="0.55"/><path d="M1004.4 198.2L891 252.4" fill="none" stroke="#B2C3D1" stroke-width="2.2"/></g><g clip-path="url(#cShade)"><ellipse cx="1002" cy="216" rx="45" ry="12" fill="#56779A" opacity="0.4" filter="url(#b5)"/><ellipse cx="880" cy="190" rx="90" ry="7" fill="#2C3A46" opacity="0.5" filter="url(#b5)"/></g><ellipse cx="1000" cy="223.5" rx="13" ry="2.6" fill="#2E3F52" opacity="0.6" filter="url(#b3)"/><rect x="836" y="217" width="10" height="3" rx="1" fill="#4b5057" opacity="0.7" filter="url(#b1)"/><rect x="848" y="222" width="7" height="2" rx="1" fill="#4b5057" opacity="0.6" filter="url(#b1)"/><rect x="892" y="228" width="5" height="2" rx="1" fill="#7b7a74" opacity="0.6" filter="url(#b1)"/><rect x="868" y="238" width="6" height="2" rx="1" fill="#6a6a66" opacity="0.6" filter="url(#b1)"/><rect x="858" y="241" width="5" height="2" rx="1" fill="#6a6a66" opacity="0.6" filter="url(#b1)"/><rect x="870" y="250" width="3" height="3" rx="1" fill="#3c4046" opacity="0.8" filter="url(#b1)"/><rect x="764" y="255" width="9" height="3" rx="1" fill="#b3ada2" opacity="0.8" filter="url(#b1)"/><rect x="801" y="264" width="3" height="2" rx="1" fill="#70706c" opacity="0.8" filter="url(#b1)"/><rect x="994" y="250" width="6" height="3" rx="1" fill="#8a8578" opacity="0.6" filter="url(#b1)"/><rect x="985" y="248" width="7" height="2" rx="1" fill="#a9a397" opacity="0.7" filter="url(#b1)"/><rect x="900" y="299" width="8" height="4" rx="1" fill="#b9b1a0" opacity="0.7" filter="url(#b1)"/><rect x="897" y="305" width="30" height="2" rx="1" fill="#cbc4b4" opacity="0.7" filter="url(#b1)"/><rect x="930" y="226" width="9" height="3" rx="1" fill="#8f8c85" opacity="0.5" filter="url(#b1)"/><rect x="730" y="184" width="310" height="146" filter="url(#fNoise)" opacity="0.06"/><rect x="730" y="184" width="310" height="146" filter="url(#fNoiseL)" opacity="0.04"/><g clip-path="url(#cShade)"><rect x="730" y="184" width="310" height="64" filter="url(#fNoise)" opacity="0.22"/></g><g filter="url(#b1)"><path d="M811 295L947.5 294L946.5 322.5L809.5 323Z" fill="#2B2E35"/><g fill="#EEE9D8"><path fill-rule="evenodd" d="M816.6 306.6Q816 301.6 824 300Q836 298.2 848 298.6Q866 299.4 865.6 305.4Q865.2 309.6 852 311.2Q838 312.6 828 314.2L817.4 314.2Q822 311.6 834 309.6Q829 311 823.6 310.4Q817.2 309.8 816.6 306.6ZM834.6 303.4Q834 306.6 840 306.8Q848.6 306.8 849 304.6Q849.2 302 842 301.8Q835.2 301.6 834.6 303.4Z"/><path d="M817 313.4H846Q858 312.6 863 310.4L866.6 310.2V319.4H817Z"/><path d="M886 313.8L909 300.6L913 300.6V304.4L897 313.8Z"/><rect x="912.4" y="298.4" width="19" height="19"/><rect x="886" y="308.4" width="54.4" height="5.4"/><rect x="902.4" y="315" width="35.4" height="4.2"/></g><rect x="822" y="306" width="9" height="2.4" fill="#2B2E35" opacity="0.45"/><rect x="852" y="301.4" width="8" height="1.8" fill="#2B2E35" opacity="0.3"/><rect x="868" y="300" width="14" height="3" fill="#6A6C6E" opacity="0.55"/><rect x="872" y="307" width="10" height="2" fill="#77787A" opacity="0.5"/><rect x="933" y="300" width="6" height="7" fill="#55575B" opacity="0.5"/><rect x="914" y="300" width="16" height="15" fill="#F4F0E2" opacity="0.5"/></g></g><path d="M736 328H1011L1022 348L1023 369L1011 388H741L730 371L728.6 342.5Z" fill="url(#gFront)"/><g clip-path="url(#cFront)"><rect x="975" y="328" width="50" height="62" fill="url(#gFrontR)"/><path d="M728 342L736 328L745 328L738 345L740 372L748 388L741 388L730 371Z" fill="#5C666B" opacity="0.5" filter="url(#b3)"/><path d="M866 331L846 333L823 337.5L800 346L781.5 361L780.5 368L784 373.5L800 370L822 363.5L862 353.5L872 345Z" fill="#2C363B" filter="url(#b1b)"/><ellipse cx="869.5" cy="334.4" rx="23" ry="6.2" fill="#2C3439" filter="url(#b1)"/><ellipse cx="869" cy="334.8" rx="21" ry="5" fill="#7C8387" filter="url(#b1)"/><path d="M848.4 335.6Q851 330.6 862 330.4L860 340.4Q851 339.6 848.4 335.6Z" fill="#A3A8AA" filter="url(#b1)"/><path d="M858.6 331.4H884.6V346Q884.4 352.6 880.4 356.4Q875 362.4 866.4 360.2Q860.8 358 860.2 351Z" fill="url(#gKnob)" filter="url(#b1)"/><ellipse cx="871" cy="333.6" rx="11" ry="2.6" fill="#B9BCBD" opacity="0.7" filter="url(#b1)"/></g><path d="M736 328.5H1011" stroke="#323B40" stroke-width="1.6" opacity="0.9"/></g></svg>
<div style="left:797px;top:38px;width:353px;height:65px;background:#7A8FE0;border-radius:7px 7px 0 0;"></div>
<div style="left:797px;top:38px;width:353px;height:25px;background:linear-gradient(to bottom,#7C96E4 0%,#7892DE 25%,#7B98E2 55%,#84A8EA 85%,#7E9CE4 100%);border-radius:7px 7px 0 0;border-top:1px solid #6D86DC;"></div>
<div style="left:800px;top:63px;width:347px;height:37px;background:#ECE9D8;"></div>
<div class="t" style="left:804.0px;top:45px;font-size:13.5px;letter-spacing:-0.375px;font-weight:bold;color:#D9E3F8;">Solid</div>
<div class="t" style="left:842.0px;top:45px;font-size:13.5px;letter-spacing:-0.51px;font-weight:bold;color:#D9E3F8;">View</div>
<div class="t" style="left:877.0px;top:45px;font-size:13.5px;letter-spacing:-0.571px;font-weight:bold;color:#D9E3F8;">Controls</div>
<div style="left:1129px;top:44px;width:16px;height:16px;border:1px solid #F0E6EE;border-radius:3px;background:linear-gradient(135deg,#C9808C 0%,#B4657A 50%,#A85A72 100%);"><svg width="14" height="14" viewBox="0 0 14 14" style="left:0;top:0"><path d="M3.2 3.2L10.8 10.8M10.8 3.2L3.2 10.8" stroke="#fff" stroke-width="2" fill="none"/></svg></div>
<div class="t" style="left:814px;top:65px;font-size:11px;letter-spacing:-0.042px;">Zoom</div>
<div class="t" style="left:814px;top:83px;font-size:11px;letter-spacing:-0.297px;">Key Light</div>
<div class="t" style="left:929px;top:83px;font-size:11px;letter-spacing:-0.33px;">Fill Light</div>
<div class="t" style="left:1028px;top:83px;font-size:11px;letter-spacing:-0.097px;">Back Light</div>
<div style="left:858px;top:67px;width:274px;height:4px;border-top:1px solid #ACA899;border-left:1px solid #ACA899;border-bottom:1px solid #fff;border-right:1px solid #fff;background:#F4F2EA;"></div>
<div style="left:859px;top:68px;width:272px;height:1px;background:#716F64;opacity:.55;"></div>
<div style="left:1032px;top:64px;width:6px;height:10px;background:#F0EEE4;border-left:1px solid #fff;border-top:1px solid #fff;border-right:1px solid #716F64;border-bottom:1px solid #716F64;"><div style="right:0;bottom:0;top:0;width:1px;background:#ACA899"></div></div>
<div style="left:867px;top:87px;width:44px;height:4px;border-top:1px solid #ACA899;border-left:1px solid #ACA899;border-bottom:1px solid #fff;border-right:1px solid #fff;background:#F4F2EA;"></div>
<div style="left:868px;top:88px;width:42px;height:1px;background:#716F64;opacity:.55;"></div>
<div style="left:905px;top:84px;width:6px;height:10px;background:#F0EEE4;border-left:1px solid #fff;border-top:1px solid #fff;border-right:1px solid #716F64;border-bottom:1px solid #716F64;"><div style="right:0;bottom:0;top:0;width:1px;background:#ACA899"></div></div>
<div style="left:973px;top:87px;width:44px;height:4px;border-top:1px solid #ACA899;border-left:1px solid #ACA899;border-bottom:1px solid #fff;border-right:1px solid #fff;background:#F4F2EA;"></div>
<div style="left:974px;top:88px;width:42px;height:1px;background:#716F64;opacity:.55;"></div>
<div style="left:985px;top:84px;width:6px;height:10px;background:#F0EEE4;border-left:1px solid #fff;border-top:1px solid #fff;border-right:1px solid #716F64;border-bottom:1px solid #716F64;"><div style="right:0;bottom:0;top:0;width:1px;background:#ACA899"></div></div>
<div style="left:1087px;top:87px;width:44px;height:4px;border-top:1px solid #ACA899;border-left:1px solid #ACA899;border-bottom:1px solid #fff;border-right:1px solid #fff;background:#F4F2EA;"></div>
<div style="left:1088px;top:88px;width:42px;height:1px;background:#716F64;opacity:.55;"></div>
<div style="left:1125px;top:84px;width:6px;height:10px;background:#F0EEE4;border-left:1px solid #fff;border-top:1px solid #fff;border-right:1px solid #716F64;border-bottom:1px solid #716F64;"><div style="right:0;bottom:0;top:0;width:1px;background:#ACA899"></div></div>
<div style="left:0px;top:811px;width:1152px;height:19px;background:#ECE9D8;"></div>
<div class="t" style="left:2px;top:817px;font-size:11.5px;letter-spacing:-0.312px;">Ready</div>
<div class="pane" style="left:458px;top:814px;width:198px;height:16px;"></div>
<div class="pane" style="left:657px;top:814px;width:295px;height:16px;"></div>
<div class="pane" style="left:953px;top:814px;width:198px;height:16px;"></div>
<div class="t" style="left:660px;top:817px;font-size:11.5px;letter-spacing:0.355px;">Object:2000:Box</div>
<div class="t" style="left:956px;top:817px;font-size:11.5px;letter-spacing:0.136px;">TrainSim Modeler Pro</div>
<div style="left:0px;top:830px;width:1152px;height:34px;background:linear-gradient(to bottom,#2A5FD6 0,#3A82EE 1px,#3F8CF2 2px,#3880EC 3px,#2E6EE4 4px,#2862DE 6px,#245CDA 9px,#245CDA 60%,#2660DE 85%,#2358D4 94%,#1C48B8 100%);"></div>
<div style="left:1041px;top:835px;width:111px;height:29px;background:linear-gradient(to bottom,#1CA0F0 0,#1A9CEC 3px,#1898EA 50%,#1590E4 80%,#1184D8 92%,#0E74C4 100%);border-left:1px solid #10389C;"></div>
<div style="left:1042px;top:835px;width:1px;height:29px;background:#2CC4FA;"></div>
<div style="left:1043px;top:835px;width:109px;height:1px;background:#38B0F4;"></div>
<div style="left:0px;top:834px;width:103px;height:30px;border-left:1px solid #176048;background:linear-gradient(to bottom,#2C7E34 0,#5CB060 1.5px,#62B464 3px,#48A24C 5px,#3A963E 8px,#37923A 12px,#3A9A3E 60%,#42AA46 85%,#3CA040 100%);border-radius:0 13px 13px 0/0 15px 15px 0;box-shadow:1px 0 2px #1A3C9C, inset 0 2px 3px rgba(255,255,255,.25), inset -3px 0 4px rgba(20,70,20,.45);"></div>
<svg width="24" height="21.8" viewBox="0 0 22 20" style="left:9.5px;top:838.5px"><path d="M3.2 2.4Q6.6 0.6 9.6 2.2L8.4 8.6Q5.4 7 2 8.8Z" fill="#E8572A"/><path d="M10.8 2.8Q14 4.4 17.8 2.6L16.4 9Q13 10.8 9.6 9.2Z" fill="#86C83C"/><path d="M1.8 10Q5.2 8.2 8.2 9.8L7 16.2Q4 14.6 0.6 16.4Z" fill="#4A82E8"/><path d="M9.4 10.4Q12.8 12 16.2 10.2L15 16.6Q11.4 18.4 8.2 16.8Z" fill="#F4C82A"/></svg>
<div class="t" style="left:34.5px;top:840px;font-size:18.5px;letter-spacing:-0.362px;font-weight:bold;font-style:italic;color:#fff;text-shadow:1px 1px 1px #2A5A1A;">Inicio</div>
<svg width="8" height="24" viewBox="0 0 8 24" style="left:111px;top:839px" shape-rendering="crispEdges"><rect x="1" y="2" width="2" height="2" fill="#1846B4"/><rect x="0" y="1" width="1" height="1" fill="#5A94F4"/><rect x="5" y="4" width="2" height="2" fill="#1846B4"/><rect x="4" y="3" width="1" height="1" fill="#5A94F4"/><rect x="1" y="6" width="2" height="2" fill="#1846B4"/><rect x="0" y="5" width="1" height="1" fill="#5A94F4"/><rect x="5" y="8" width="2" height="2" fill="#1846B4"/><rect x="4" y="7" width="1" height="1" fill="#5A94F4"/><rect x="1" y="10" width="2" height="2" fill="#1846B4"/><rect x="0" y="9" width="1" height="1" fill="#5A94F4"/><rect x="5" y="12" width="2" height="2" fill="#1846B4"/><rect x="4" y="11" width="1" height="1" fill="#5A94F4"/><rect x="1" y="14" width="2" height="2" fill="#1846B4"/><rect x="0" y="13" width="1" height="1" fill="#5A94F4"/><rect x="5" y="16" width="2" height="2" fill="#1846B4"/><rect x="4" y="15" width="1" height="1" fill="#5A94F4"/><rect x="1" y="18" width="2" height="2" fill="#1846B4"/><rect x="0" y="17" width="1" height="1" fill="#5A94F4"/><rect x="5" y="20" width="2" height="2" fill="#1846B4"/><rect x="4" y="19" width="1" height="1" fill="#5A94F4"/></svg>
<svg width="8" height="24" viewBox="0 0 8 24" style="left:213px;top:839px" shape-rendering="crispEdges"><rect x="1" y="2" width="2" height="2" fill="#1846B4"/><rect x="0" y="1" width="1" height="1" fill="#5A94F4"/><rect x="5" y="4" width="2" height="2" fill="#1846B4"/><rect x="4" y="3" width="1" height="1" fill="#5A94F4"/><rect x="1" y="6" width="2" height="2" fill="#1846B4"/><rect x="0" y="5" width="1" height="1" fill="#5A94F4"/><rect x="5" y="8" width="2" height="2" fill="#1846B4"/><rect x="4" y="7" width="1" height="1" fill="#5A94F4"/><rect x="1" y="10" width="2" height="2" fill="#1846B4"/><rect x="0" y="9" width="1" height="1" fill="#5A94F4"/><rect x="5" y="12" width="2" height="2" fill="#1846B4"/><rect x="4" y="11" width="1" height="1" fill="#5A94F4"/><rect x="1" y="14" width="2" height="2" fill="#1846B4"/><rect x="0" y="13" width="1" height="1" fill="#5A94F4"/><rect x="5" y="16" width="2" height="2" fill="#1846B4"/><rect x="4" y="15" width="1" height="1" fill="#5A94F4"/><rect x="1" y="18" width="2" height="2" fill="#1846B4"/><rect x="0" y="17" width="1" height="1" fill="#5A94F4"/><rect x="5" y="20" width="2" height="2" fill="#1846B4"/><rect x="4" y="19" width="1" height="1" fill="#5A94F4"/></svg>
<svg width="18" height="18" viewBox="0 0 18 18" style="left:124px;top:840px"><path d="M4 11.5Q3.2 5.8 8.6 4.6Q14 4.2 14.6 10H7.4Q7.8 12.8 10.4 12.8Q12 12.6 12.6 11.4H14.6Q13.2 15.6 9 15.4Q5 15 4 11.5ZM7.4 8.2H11.4Q11 6.6 9.4 6.6Q7.8 6.8 7.4 8.2Z" fill="#3A9CF0" stroke="#49A8F4" stroke-width="0.9"/><path d="M15.8 3Q13.6 1 9.4 3.4Q3.6 7.2 2 13Q1.6 16.2 4.8 16" fill="none" stroke="#F0B428" stroke-width="1.7"/></svg>
<svg width="18" height="18" viewBox="0 0 18 18" style="left:147px;top:840px"><rect x="1.5" y="4" width="12" height="12" rx="2" fill="#F4E8C0" stroke="#fff" stroke-width="0.8"/><path d="M4 3.4L14.5 1.6L15.4 12.4L6 14.4Z" fill="#DCEBFA" stroke="#2E6FD0" stroke-width="0.9"/><path d="M12 5.6Q8 4.4 7.4 8.2Q7.6 11.8 11.6 11" fill="none" stroke="#2A56B0" stroke-width="1.7"/><path d="M8.6 9.2L11.4 7.4" stroke="#222" stroke-width="1.2"/><circle cx="14.4" cy="5" r="1.1" fill="#E85028"/></svg>
<svg width="18" height="18" viewBox="0 0 18 18" style="left:170px;top:840px"><circle cx="9" cy="9" r="7.4" fill="#E4EAF4" stroke="#A8B4CC" stroke-width="1.2"/><path d="M10.5 1.8A7.4 7.4 0 0 1 16.2 7.5" fill="none" stroke="#58B848" stroke-width="1.4"/><path d="M2.2 6A7.4 7.4 0 0 1 7 1.9" fill="none" stroke="#E85830" stroke-width="1.4"/><path d="M15.6 12.4A7.4 7.4 0 0 1 10.4 16.2" fill="none" stroke="#F0B82C" stroke-width="1.4"/><circle cx="9" cy="9" r="4.6" fill="#2C64D8"/><path d="M7.4 6.4L12 9L7.4 11.6Z" fill="#fff"/></svg>
<svg width="10" height="8" viewBox="0 0 10 8" style="left:198px;top:840px"><path d="M1 1L3.6 3.6L1 6.2M5.2 1L7.8 3.6L5.2 6.2" fill="none" stroke="#BFD8FF" stroke-width="1.2"/></svg>
<div style="left:224px;top:838px;width:160px;height:23px;background:linear-gradient(to bottom,#183E98 0,#1B4CB2 2px,#1E52BA 5px,#1F54BC 80%,#2258C4 100%);border:1px solid #143A94;border-radius:3px;"><div style="left:10px;top:3px;width:16px;height:16px;background:#000;"><svg width="16" height="16" viewBox="0 0 16 16" style="left:0;top:0"><path d="M7.3 3.4L4.5 15.2" stroke="#fff" stroke-width="1.9" fill="none"/><path d="M8.5 5.2L11.6 13.6" stroke="#E4E4E4" stroke-width="1.3" fill="none"/><path d="M10.5 5.2L12.8 12.9" stroke="#FFFF00" stroke-width="1.7" fill="none"/><path d="M7.5 0.8L9.1 2.4L7.5 4L5.9 2.4Z" fill="none" stroke="#fff" stroke-width="1"/></svg></div></div>
<div class="t" style="left:254px;top:844px;font-size:11px;letter-spacing:-0.019px;color:#fff;">Cambio de agujas - T...</div>
<div style="left:385px;top:838px;width:159px;height:23px;background:linear-gradient(to bottom,#5C9CF8 0,#4288F2 2px,#3A7EEE 5px,#387AEC 70%,#3474E6 90%,#2C68DC 100%);border:1px solid #3A7AEA;border-top-color:#5E9CF6;border-left-color:#5A98F4;border-bottom-color:#2A62D4;border-right-color:#2A62D4;border-radius:3px;box-shadow:0 1px 0 #1E4FC0;"><svg width="17" height="15" viewBox="0 0 17 15" style="left:8px;top:3px"><defs><linearGradient id="gFo" x1="0" y1="0" x2="0" y2="1"><stop offset="0" stop-color="#FFFBD0"/><stop offset="1" stop-color="#F4D060"/></linearGradient></defs><path d="M1.2 2.6Q1.2 0.9 2.8 0.9H5.6L7.2 2.6H13Q14.6 2.6 14.6 4.2V10.6Q14.6 12.2 13 12.2H2.8Q1.2 12.2 1.2 10.6Z" fill="#F0C848" stroke="#C08A18" stroke-width="1"/><path d="M2.4 4.9H13.6V10.4Q13.6 11.2 12.8 11.2H3.2Q2.4 11.2 2.4 10.4Z" fill="url(#gFo)"/></svg></div>
<div class="t" style="left:413.5px;top:844px;font-size:11px;letter-spacing:0.064px;color:#fff;"><b style="color:#EBD58A">3</b> Explorador de Wi...</div>
<svg width="9" height="6" viewBox="0 0 9 6" style="left:532px;top:847px"><path d="M0.6 0.4H7.8L4.2 4.6Z" fill="#fff"/></svg>
<div style="left:545px;top:838px;width:159px;height:23px;background:linear-gradient(to bottom,#5C9CF8 0,#4288F2 2px,#3A7EEE 5px,#387AEC 70%,#3474E6 90%,#2C68DC 100%);border:1px solid #3A7AEA;border-top-color:#5E9CF6;border-left-color:#5A98F4;border-bottom-color:#2A62D4;border-right-color:#2A62D4;border-radius:3px;box-shadow:0 1px 0 #1E4FC0;"><svg width="18" height="18" viewBox="0 0 18 18" style="left:8px;top:2px"><path d="M2 12L4 5L9 2L16 5L14 13L7 16Z" fill="#3A2C1C"/><path d="M5 6L9 3L14 5.4L12 9L6 9.4Z" fill="#E8A020"/><path d="M7 5L10 4L11 6.4L8 7.2Z" fill="#E84818"/><path d="M4 10L12 9.4L13 12L7 14.6Z" fill="#6A5A44"/><path d="M11 6L13.4 6.4L12.6 8.6Z" fill="#F4E060"/></svg></div>
<div class="t" style="left:573.5px;top:844px;font-size:11px;letter-spacing:0.021px;color:#fff;">Editor de Rutas de Tr...</div>
<div style="left:705px;top:838px;width:159px;height:23px;background:linear-gradient(to bottom,#5C9CF8 0,#4288F2 2px,#3A7EEE 5px,#387AEC 70%,#3474E6 90%,#2C68DC 100%);border:1px solid #3A7AEA;border-top-color:#5E9CF6;border-left-color:#5A98F4;border-bottom-color:#2A62D4;border-right-color:#2A62D4;border-radius:3px;box-shadow:0 1px 0 #1E4FC0;"><svg width="18" height="18" viewBox="0 0 18 18" style="left:9px;top:2px"><circle cx="6.4" cy="5.4" r="3.4" fill="#6CC04C"/><path d="M0.8 15.6Q0.6 9.4 6.4 9.2Q12.2 9.4 12 15.6Q6.4 17.6 0.8 15.6Z" fill="#62B844"/><circle cx="5.6" cy="4.4" r="1.5" fill="#A6E088"/><path d="M9.4 3Q9.4 0.8 12.6 0.8Q16 0.8 16 3Q16 5 13.2 5.2L11.6 7.4L11.6 5.2Q9.4 4.8 9.4 3Z" fill="#F4F8FC" stroke="#B8C4D4" stroke-width="0.5"/></svg></div>
<div class="t" style="left:734px;top:844px;font-size:11px;letter-spacing:-0.084px;color:#fff;">Joan Marc - Convers...</div>
<div style="left:865px;top:838px;width:159px;height:23px;background:linear-gradient(to bottom,#5C9CF8 0,#4288F2 2px,#3A7EEE 5px,#387AEC 70%,#3474E6 90%,#2C68DC 100%);border:1px solid #3A7AEA;border-top-color:#5E9CF6;border-left-color:#5A98F4;border-bottom-color:#2A62D4;border-right-color:#2A62D4;border-radius:3px;box-shadow:0 1px 0 #1E4FC0;"><svg width="18" height="18" viewBox="0 0 18 18" style="left:9px;top:2px"><rect x="1" y="3" width="13" height="13" rx="2.4" fill="#F8F8F4" stroke="#C8CCD4" stroke-width="0.8"/><path d="M5 14.4Q6.4 8 12 3.4Q15 1.4 15.8 2.8Q16 6 12.4 9.6Q9 12.8 5 14.4Z" fill="#5A9A3C"/><path d="M6.4 12.6Q8 8.4 12.4 4.6Q13.6 6.6 10.6 9.8Q8.6 11.8 6.4 12.6Z" fill="#E8A428"/><path d="M3.6 15.4L6.2 11.8L7.2 13.2Z" fill="#E86428"/><path d="M13 2.6Q15 1.4 15.8 2.8L14.4 4.6Z" fill="#3A6A24"/></svg></div>
<div class="t" style="left:894px;top:844px;font-size:11px;letter-spacing:0.001px;color:#fff;">Adobe Photoshop - [...</div>
<svg width="20" height="20" viewBox="0 0 20 20" style="left:1031px;top:840px"><defs><radialGradient id="gCh" cx="0.4" cy="0.35" r="0.75"><stop offset="0" stop-color="#6CC0FA"/><stop offset="0.6" stop-color="#2A8CEC"/><stop offset="1" stop-color="#1A62D0"/></radialGradient></defs><circle cx="10.4" cy="9.6" r="8.8" fill="url(#gCh)" stroke="#BFE0FF" stroke-width="0.9"/><path d="M12.2 5.6L8 9.6L12.2 13.6" fill="none" stroke="#fff" stroke-width="2.1"/></svg>
<svg width="16" height="17" viewBox="0 0 16 17" style="left:1052px;top:840px"><circle cx="8" cy="8.6" r="7.2" fill="#3C78D8" stroke="#D8E4F4" stroke-width="1"/><path d="M1.4 6.4Q8 2.4 14.6 6.4" fill="none" stroke="#C8D8F0" stroke-width="1"/><path d="M3 14.4L7 2.4H9L13 14.4" fill="none" stroke="#1A1A10" stroke-width="3.2"/><path d="M3 14.4L7 2.4H9L13 14.4" fill="none" stroke="#D8C818" stroke-width="1.6"/><rect x="6.6" y="11.6" width="2.8" height="3.4" fill="#fff"/></svg>
<svg width="14" height="16" viewBox="0 0 14 16" style="left:1071px;top:841px"><path d="M7 0.8Q9.6 2.6 12.8 2.4Q13.4 10.6 7 15.2Q0.6 10.6 1.2 2.4Q4.4 2.6 7 0.8Z" fill="#D82830" stroke="#7A1418" stroke-width="0.8"/><path d="M7 1.8Q5 3.2 2.2 3.2Q2 8 4 11Z" fill="#F06068" opacity="0.8"/><path d="M4.6 5.2L9.4 10M9.4 5.2L4.6 10" stroke="#fff" stroke-width="1.7"/></svg>
<svg width="16" height="17" viewBox="0 0 16 17" style="left:1088px;top:840px"><circle cx="8" cy="4.8" r="3.8" fill="#7CCC5C"/><path d="M1 15Q0.6 8.6 8 8.4Q15.4 8.6 15 15Q8 17.4 1 15Z" fill="#6CC04C"/><circle cx="7" cy="3.8" r="1.6" fill="#B4E89C"/><path d="M3 12Q3.4 9.8 6 9.6" stroke="#A4E088" stroke-width="1" fill="none"/></svg>
<div class="t" style="left:1111.5px;top:844px;font-size:11px;letter-spacing:-0.008px;color:#fff;">22:34</div>
</body></html>
